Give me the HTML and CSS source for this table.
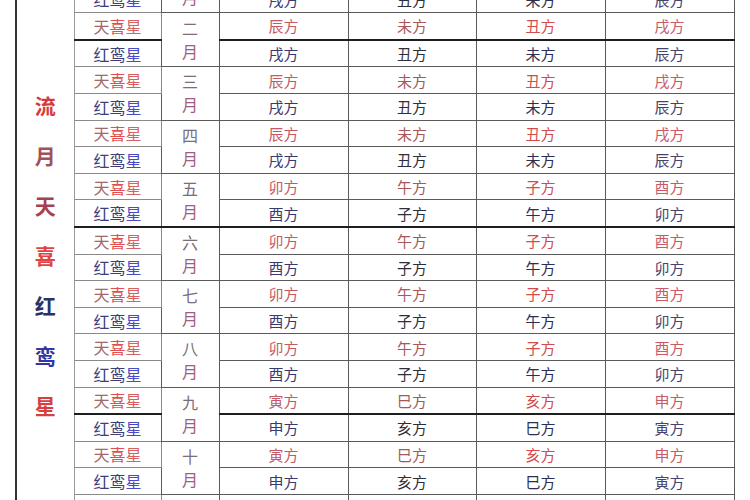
FILE: index.html
```html
<!DOCTYPE html>
<html lang="zh">
<head>
<meta charset="utf-8">
<title>流月天喜红鸾星</title>
<link rel="stylesheet" href="styles.css">
</head>
<body>
<table class="sheet">
<colgroup>
<col class="c-label"><col class="c-name"><col class="c-mon"><col class="c-val"><col class="c-val2"><col class="c-val"><col class="c-val">
</colgroup>
<tbody>
<tr>
<td class="label" rowspan="22"><div class="lab-chars"><span class="l1">流</span><span class="l2">月</span><span class="l3">天</span><span class="l4">喜</span><span class="l5">红</span><span class="l6">鸾</span><span class="l7">星</span></div></td>
<td class="name"><span class="t1">天</span><span class="t2">喜</span><span class="t3">星</span></td>
<td class="mon" rowspan="2"><span class="m1">正</span><br><span class="m2">月</span></td>
<td class="r1">辰方</td><td class="r2">未方</td><td class="r3">丑方</td><td class="r4">戌方</td>
</tr>
<tr>
<td class="name"><span class="h1">红鸾</span><span class="h2">星</span></td>
<td class="b1">戌方</td><td class="b2">丑方</td><td class="b3">未方</td><td class="b4">辰方</td>
</tr>
<tr>
<td class="name"><span class="t1">天</span><span class="t2">喜</span><span class="t3">星</span></td>
<td class="mon" rowspan="2"><span class="m1">二</span><br><span class="m2">月</span></td>
<td class="r1">辰方</td><td class="r2">未方</td><td class="r3">丑方</td><td class="r4">戌方</td>
</tr>
<tr class="thick">
<td class="name"><span class="h1">红鸾</span><span class="h2">星</span></td>
<td class="b1">戌方</td><td class="b2">丑方</td><td class="b3">未方</td><td class="b4">辰方</td>
</tr>
<tr>
<td class="name"><span class="t1">天</span><span class="t2">喜</span><span class="t3">星</span></td>
<td class="mon" rowspan="2"><span class="m1">三</span><br><span class="m2">月</span></td>
<td class="r1">辰方</td><td class="r2">未方</td><td class="r3">丑方</td><td class="r4">戌方</td>
</tr>
<tr>
<td class="name"><span class="h1">红鸾</span><span class="h2">星</span></td>
<td class="b1">戌方</td><td class="b2">丑方</td><td class="b3">未方</td><td class="b4">辰方</td>
</tr>
<tr>
<td class="name"><span class="t1">天</span><span class="t2">喜</span><span class="t3">星</span></td>
<td class="mon" rowspan="2"><span class="m1">四</span><br><span class="m2">月</span></td>
<td class="r1">辰方</td><td class="r2">未方</td><td class="r3">丑方</td><td class="r4">戌方</td>
</tr>
<tr>
<td class="name"><span class="h1">红鸾</span><span class="h2">星</span></td>
<td class="b1">戌方</td><td class="b2">丑方</td><td class="b3">未方</td><td class="b4">辰方</td>
</tr>
<tr>
<td class="name"><span class="t1">天</span><span class="t2">喜</span><span class="t3">星</span></td>
<td class="mon" rowspan="2"><span class="m1">五</span><br><span class="m2">月</span></td>
<td class="r1">卯方</td><td class="r2">午方</td><td class="r3">子方</td><td class="r4">酉方</td>
</tr>
<tr>
<td class="name"><span class="h1">红鸾</span><span class="h2">星</span></td>
<td class="b1">酉方</td><td class="b2">子方</td><td class="b3">午方</td><td class="b4">卯方</td>
</tr>
<tr class="thick">
<td class="name"><span class="t1">天</span><span class="t2">喜</span><span class="t3">星</span></td>
<td class="mon" rowspan="2"><span class="m1">六</span><br><span class="m2">月</span></td>
<td class="r1">卯方</td><td class="r2">午方</td><td class="r3">子方</td><td class="r4">酉方</td>
</tr>
<tr>
<td class="name"><span class="h1">红鸾</span><span class="h2">星</span></td>
<td class="b1">酉方</td><td class="b2">子方</td><td class="b3">午方</td><td class="b4">卯方</td>
</tr>
<tr>
<td class="name"><span class="t1">天</span><span class="t2">喜</span><span class="t3">星</span></td>
<td class="mon" rowspan="2"><span class="m1">七</span><br><span class="m2">月</span></td>
<td class="r1">卯方</td><td class="r2">午方</td><td class="r3">子方</td><td class="r4">酉方</td>
</tr>
<tr>
<td class="name"><span class="h1">红鸾</span><span class="h2">星</span></td>
<td class="b1">酉方</td><td class="b2">子方</td><td class="b3">午方</td><td class="b4">卯方</td>
</tr>
<tr>
<td class="name"><span class="t1">天</span><span class="t2">喜</span><span class="t3">星</span></td>
<td class="mon" rowspan="2"><span class="m1">八</span><br><span class="m2">月</span></td>
<td class="r1">卯方</td><td class="r2">午方</td><td class="r3">子方</td><td class="r4">酉方</td>
</tr>
<tr>
<td class="name"><span class="h1">红鸾</span><span class="h2">星</span></td>
<td class="b1">酉方</td><td class="b2">子方</td><td class="b3">午方</td><td class="b4">卯方</td>
</tr>
<tr>
<td class="name"><span class="t1">天</span><span class="t2">喜</span><span class="t3">星</span></td>
<td class="mon" rowspan="2"><span class="m1">九</span><br><span class="m2">月</span></td>
<td class="r1">寅方</td><td class="r2">巳方</td><td class="r3">亥方</td><td class="r4">申方</td>
</tr>
<tr class="thick">
<td class="name"><span class="h1">红鸾</span><span class="h2">星</span></td>
<td class="b1">申方</td><td class="b2">亥方</td><td class="b3">巳方</td><td class="b4">寅方</td>
</tr>
<tr>
<td class="name"><span class="t1">天</span><span class="t2">喜</span><span class="t3">星</span></td>
<td class="mon" rowspan="2"><span class="m1">十</span><br><span class="m2">月</span></td>
<td class="r1">寅方</td><td class="r2">巳方</td><td class="r3">亥方</td><td class="r4">申方</td>
</tr>
<tr>
<td class="name"><span class="h1">红鸾</span><span class="h2">星</span></td>
<td class="b1">申方</td><td class="b2">亥方</td><td class="b3">巳方</td><td class="b4">寅方</td>
</tr>
<tr>
<td class="name"><span class="t1">天</span><span class="t2">喜</span><span class="t3">星</span></td>
<td class="mon" rowspan="2"><span class="m1">十一</span><br><span class="m2">月</span></td>
<td class="r1">寅方</td><td class="r2">巳方</td><td class="r3">亥方</td><td class="r4">申方</td>
</tr>
<tr>
<td class="name"><span class="h1">红鸾</span><span class="h2">星</span></td>
<td class="b1">申方</td><td class="b2">亥方</td><td class="b3">巳方</td><td class="b4">寅方</td>
</tr>
</tbody>
</table>
</body>
</html>
```
FILE: styles.css
```css
html, body {
  margin: 0;
  padding: 0;
  background: #ffffff;
}
body {
  font-family: "Noto Sans CJK SC", "Noto Sans", sans-serif;
  overflow: hidden;
  height: 500px;
}
.sheet {
  border-collapse: collapse;
  table-layout: fixed;
  width: 719px;
  margin: -41px 0 0 15px;
  border-left: 2px solid #333333;
  border-right: 1px solid #444444;
}
.c-label { width: 58px; }
.c-name { width: 87px; }
.c-mon { width: 58px; }
.c-val { width: 129px; }
.c-val2 { width: 128px; }
.sheet td {
  border: 1px solid #5a5a5a;
  padding: 0;
  height: 25.6px;
  text-align: center;
  vertical-align: middle;
  font-size: 15px;
  line-height: 1;
}
.sheet tr.thick td {
  border-top: 2px solid #1e1e1e;
}
.sheet td.label {
  vertical-align: top;
  border-left: 2px solid #333333;
  border-right: 1px solid #9a9a9a;
}
.lab-chars {
  display: flex;
  flex-direction: column;
  align-items: center;
  padding-top: 120px;
  font-size: 21px;
  font-weight: 700;
}
.lab-chars span {
  display: block;
  height: 50px;
  line-height: 50px;
}
.l1 { color: #d63a3a; }
.l2 { color: #a4505a; }
.l3 { color: #a8404f; }
.l4 { color: #e04444; }
.l5 { color: #2e3262; }
.l6 { color: #3434a6; }
.l7 { color: #d84040; }

.sheet td.name {
  font-size: 16px;
  border-color: #8a8a8a;
}
.t1 { color: #a06a6a; }
.t2 { color: #e05050; }
.t3 { color: #d66262; }
.h1 { color: #3e3e78; }
.h2 { color: #4a4ac4; }

.sheet td.mon {
  font-size: 16px;
  line-height: 23px;
}
.m1 { color: #7a6e7a; }
.m2 { color: #9c6080; }

.r1 { color: #c45a66; }
.r2 { color: #a85858; }
.r3 { color: #d24c4c; }
.r4 { color: #c85a6a; }
.b1 { color: #3a3a6e; }
.b2 { color: #2f2f3a; }
.b3 { color: #2e2e52; }
.b4 { color: #44446e; }
```
